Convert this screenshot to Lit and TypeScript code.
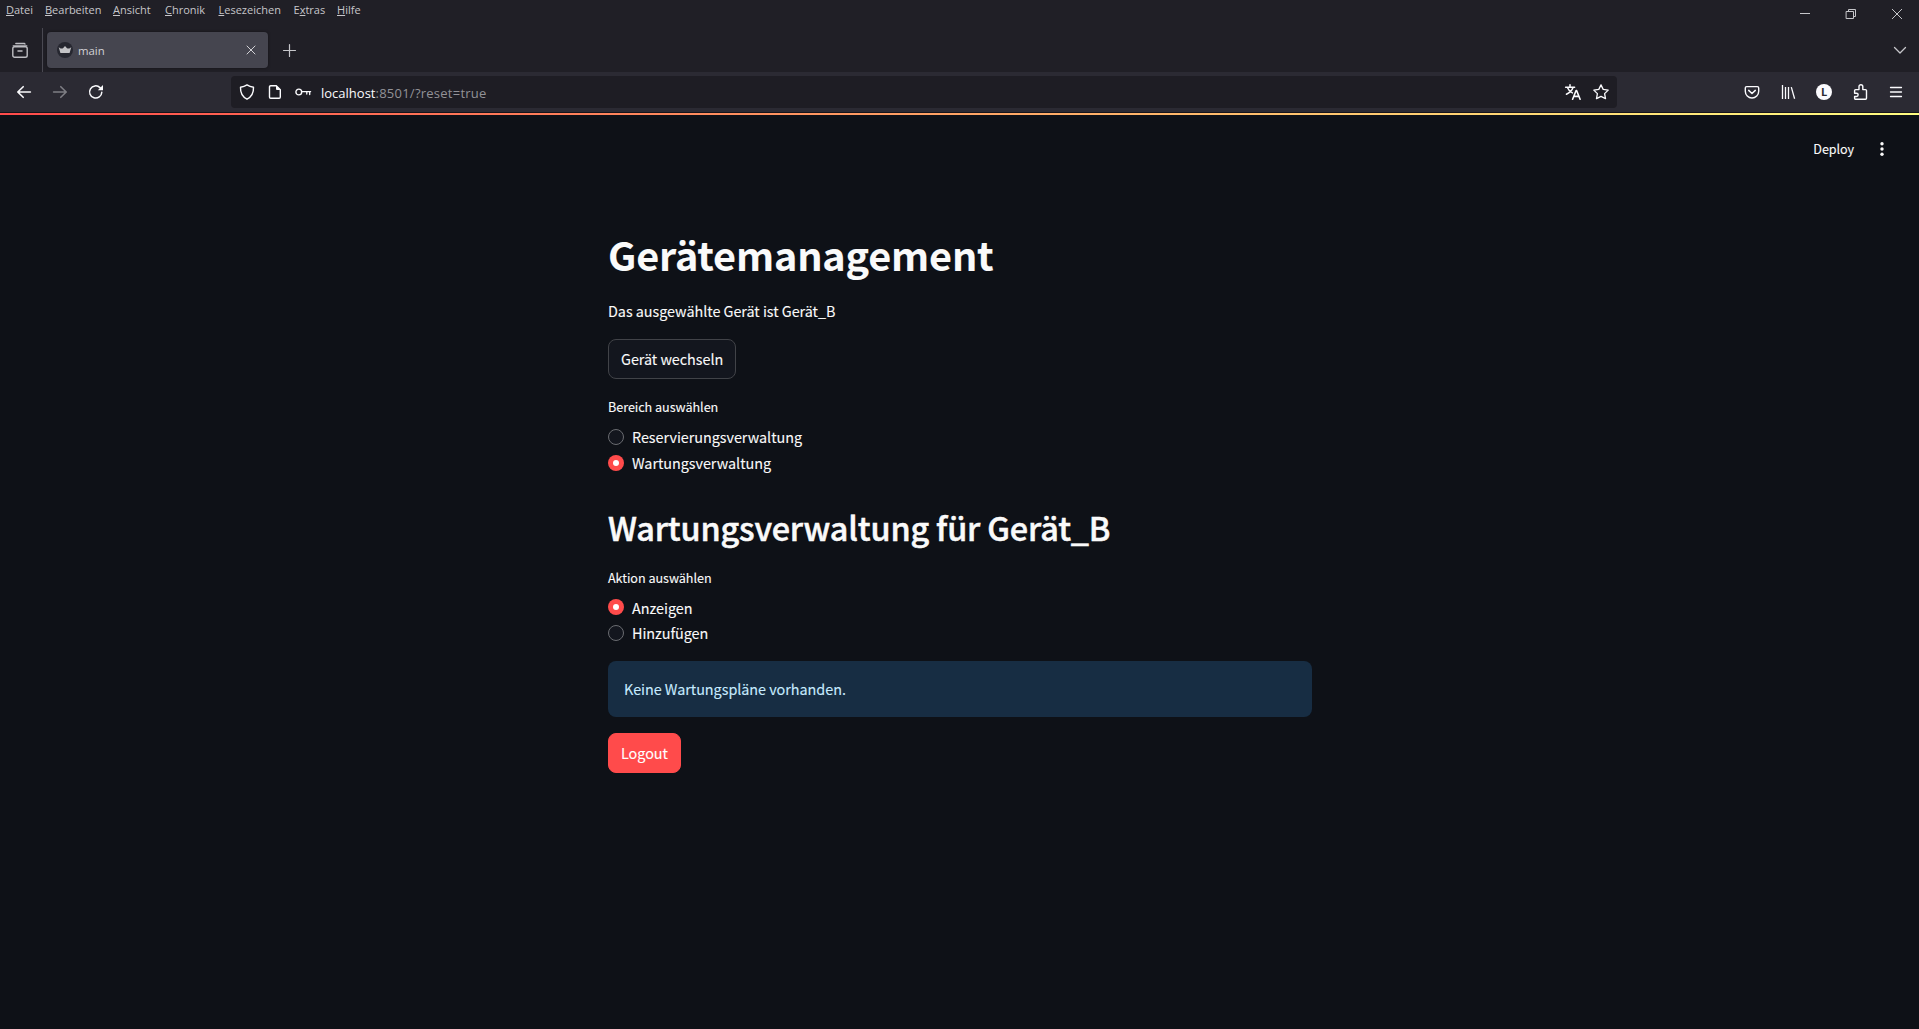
import { LitElement, html, svg, css, nothing } from "lit";
import { customElement, property, state } from "lit/decorators.js";
import { classMap } from "lit/directives/class-map.js";

const icons: Record<string, unknown> = {
  recent: svg`<path d="M3.8.9h8.4a.8.8 0 0 1 .8.6M1.2 3.2h13.6" transform="translate(0 .6)" stroke-width="1.3"/><rect x=".8" y="4.7" width="14.4" height="10.5" rx="1.8" stroke-width="1.4"/><path d="M6 9h4" stroke-width="1.5"/>`,
  back: svg`<path d="M14.4 8H2M7.2 2.7 1.8 8l5.4 5.3" stroke-width="1.6"/>`,
  forward: svg`<path d="M1.6 8H14M8.8 2.7 14.2 8l-5.4 5.3" stroke-width="1.6"/>`,
  reload: svg`<path d="M13.8 8.2A6.1 6.1 0 1 1 12 3.6l1.4 1.3" stroke-width="1.5"/><path d="M15 1.1v5.2H9.8z" fill="currentColor" stroke="none"/>`,
  shield: svg`<path d="M8 .9c2.2 1.5 4.3 2.1 6.5 2.4.2 4.8-1.4 9.3-6.5 11.9C2.9 12.6 1.3 8.1 1.5 3.3 3.7 3 5.8 2.4 8 .9z" stroke-width="1.4"/>`,
  page: svg`<path d="M3.7 1.7h5.6l4 4v7.3a1.2 1.2 0 0 1-1.2 1.2H3.7a1.2 1.2 0 0 1-1.2-1.2V2.9a1.2 1.2 0 0 1 1.2-1.2z" stroke-width="1.4"/><path d="M9 1.2 13.9 6.1H10a1 1 0 0 1-1-1z" fill="currentColor" stroke="none"/>`,
  key: svg`<circle cx="3.8" cy="8" r="2.9" stroke-width="1.4"/><path d="M7 7.6h8.6M11.8 7.6v2.4M14.7 7.6v3" stroke-width="1.3"/>`,
  translate: svg`<path d="M.6 3.2h9M5 .8v2.4M8 3.4C7 6.5 4.3 8.8 1.4 10.2M2.4 3.5C3.4 6 5.3 7.9 7.4 8.9" stroke-width="1.5"/><path d="m7.6 15.2 3.5-8.7h.5l3.5 8.7M8.9 12.4h5" stroke-width="1.6"/>`,
  star: svg`<path d="m8 .9 2.2 4.5 5 .7-3.6 3.5.9 5L8 12.3l-4.5 2.3.9-5L.8 6.1l5-.7z" stroke-width="1.3"/>`,
  pocket: svg`<path d="M2.7 2.6h10.6a1.4 1.4 0 0 1 1.4 1.4v3.3a6.7 6.7 0 0 1-13.4 0V4a1.4 1.4 0 0 1 1.4-1.4z" stroke-width="1.4"/><path d="M4.7 6.4 8 9.5l3.3-3.1" stroke-width="1.5"/>`,
  library: svg`<path d="M2.5 1v14M5.5 3v12M8.5 3v12M11.3 3.1l3.3 11.7" stroke-width="1.3" stroke-linecap="butt"/>`,
  puzzle: svg`<path d="M7 5.6V2.6a1.9 1.9 0 0 1 3.8 0v3h2.7a1 1 0 0 1 1 1v7.7a1 1 0 0 1-1 1H3.6a1 1 0 0 1-1-1v-1.800h1.900a1.600 1.600 0 0 0 0-3.300H2.600V6.600a1 1 0 0 1 1-1z" stroke-width="1.4"/>`,
  menu: svg`<path d="M2.5 3.5h11M2.5 8h11M2.5 12.5h11" stroke-width="1.3"/>`,
  close: svg`<path d="m4 4 8 8M12 4l-8 8" stroke-width="1"/>`,
  plus: svg`<path d="M8.5 2.5v12M2.5 8.5h12" stroke-width="1.2"/>`,
  chevron: svg`<path d="m2.5 5.5 5.500 5.500 5.500-5.500" stroke-width="1.3"/>`,
  minimize: svg`<path d="M3 8.5h10" stroke-width="1" stroke-linecap="butt"/>`,
  restore: svg`<path d="M3.5 6.5h7v7h-7zM5.5 6.5v-2h7v7h-2" stroke-width="1" stroke-linejoin="miter"/>`,
  shut: svg`<path d="m3.3 4.3 9.4 9.4M12.7 4.3l-9.4 9.4" stroke-width="1"/>`,
  kebab: svg`<g fill="currentColor" stroke="none"><circle cx="8" cy="2.7" r="1.7"/><circle cx="8" cy="8" r="1.7"/><circle cx="8" cy="13.3" r="1.7"/></g>`,
  crown: svg`<circle cx="8" cy="8" r="8" fill="#262730" stroke="none"/><path d="M1.7 5c1.300 1.600 3 1.900 4.300 1.300L8 4l2 2.300c1.300.6 3 .3 4.300-1.300L12.600 11H3.400z" fill="#c3c3c6" stroke="none"/>`,
};

@customElement("ui-icon")
class UiIcon extends LitElement {
  @property() name = "";
  static styles = css`
    :host { display: block; flex: none; width: 16px; height: 16px; }
    svg { display: block; overflow: visible; fill: none; stroke: currentColor; stroke-linecap: round; stroke-linejoin: round; }
  `;
  render() {
    return html`<svg width="16" height="16" viewBox="0 0 16 16">${icons[this.name] ?? nothing}</svg>`;
  }
}

@customElement("browser-chrome")
class BrowserChrome extends LitElement {
  static styles = css`
    :host { display: block; height: 113px; background: #201f26; color: #c6c6ca; font-family: "Open Sans", "Noto Sans", sans-serif; font-size: 11px; }
    .title { display: flex; justify-content: space-between; height: 28px; }
    .menus { display: grid; grid-template-columns: 39px 68px 52px 53.5px 75px 43.5px auto; padding-left: 6px; line-height: 20px; height: 20px; }
    u { text-decoration-thickness: 1px; text-underline-offset: 1px; }
    .controls { display: flex; gap: 30px; padding: 5px 14px 0 0; }
    .tabs { display: flex; align-items: center; height: 44px; }
    .recent { display: flex; align-items: center; box-sizing: border-box; width: 43px; height: 44px; padding: 0 0 0 12px; border-right: 1px solid #4a4952; color: #bdbdc2; }
    .tab { display: flex; align-items: center; box-sizing: border-box; width: 221px; height: 36px; margin: 0 13px 0 4px; padding: 0 9px 0 10px; border-radius: 4px; background: #45454f; box-shadow: 0 0 3px rgba(0,0,0,.4); color: #d2d2d6; }
    .tab span { flex: 1; margin-left: 5px; line-height: 20px; padding-top: 1px; font-size: 11.4px; }
    .all { margin-left: auto; padding-right: 11px; }
    .bar { display: flex; align-items: center; height: 40px; background: #2b2a33; color: #fbfbfe; border-bottom: 1px solid #15141b; }
    .nav { display: flex; gap: 20px; box-sizing: border-box; width: 231px; padding-left: 16px; }
    .off { opacity: .4; }
    .url { display: flex; align-items: center; gap: 12px; box-sizing: border-box; width: 1386px; height: 32px; padding: 0 8px; border-radius: 4px; background: #1e1d24; }
    .address { flex: 1; margin-left: -2px; padding-top: 1px; font-size: 13px; line-height: 20px; white-space: nowrap; }
    .rest { color: #929297; letter-spacing: .25px; }
    .extras { display: flex; align-items: center; gap: 20px; margin-left: auto; padding-right: 15px; }
    .avatar { display: flex; align-items: center; justify-content: center; width: 16px; height: 16px; border-radius: 50%; background: #fbfbfe; color: #2b2a33; font: 700 11px/16px "Open Sans", sans-serif; }
  `;
  render() {
    return html`
      <div class="title">
        <div class="menus">
          <span><u>D</u>atei</span><span><u>B</u>earbeiten</span><span><u>A</u>nsicht</span><span><u>C</u>hronik</span><span><u>L</u>esezeichen</span><span>E<u>x</u>tras</span><span><u>H</u>ilfe</span>
        </div>
        <div class="controls"><ui-icon name="minimize"></ui-icon><ui-icon name="restore"></ui-icon><ui-icon name="shut"></ui-icon></div>
      </div>
      <div class="tabs">
        <div class="recent"><ui-icon name="recent"></ui-icon></div>
        <div class="tab"><ui-icon name="crown"></ui-icon><span>main</span><ui-icon name="close"></ui-icon></div>
        <ui-icon name="plus"></ui-icon>
        <div class="all"><ui-icon name="chevron"></ui-icon></div>
      </div>
      <div class="bar">
        <div class="nav"><ui-icon name="back"></ui-icon><ui-icon class="off" name="forward"></ui-icon><ui-icon name="reload"></ui-icon></div>
        <div class="url">
          <ui-icon name="shield"></ui-icon><ui-icon name="page"></ui-icon><ui-icon name="key"></ui-icon>
          <div class="address">localhost<span class="rest">:8501/?reset=true</span></div>
          <ui-icon name="translate"></ui-icon><ui-icon name="star"></ui-icon>
        </div>
        <div class="extras">
          <ui-icon name="pocket"></ui-icon><ui-icon name="library"></ui-icon><span class="avatar">L</span><ui-icon name="puzzle"></ui-icon><ui-icon name="menu"></ui-icon>
        </div>
      </div>`;
  }
}

@customElement("radio-group")
class RadioGroup extends LitElement {
  @property() label = "";
  @property({ attribute: false }) options: string[] = [];
  @property({ type: Number }) selected = 0;
  static styles = css`
    :host { display: block; }
    .label { font-size: 12.6px; line-height: 21px; }
    .options { display: flex; flex-direction: column; gap: var(--row-gap, 2px); padding-top: var(--label-gap, 8px); }
    .option { display: flex; align-items: center; gap: 8px; height: 24px; line-height: 24px; cursor: pointer; }
    .text { padding-top: var(--text-drop, 0px); }
    .dot { display: flex; align-items: center; justify-content: center; box-sizing: border-box; width: 16px; height: 16px; border: 1px solid #6a6c71; border-radius: 50%; background: #13161e; }
    .dot.on { border: none; background: #ff4b4b; }
    .dot.on::after { content: ""; width: 6px; height: 6px; border-radius: 50%; background: #fff; }
  `;
  render() {
    return html`<div class="label">${this.label}</div>
      <div class="options">${this.options.map((o, i) => html`
        <div class="option" @click=${() => (this.selected = i)}>
          <span class=${classMap({ dot: true, on: i === this.selected })}></span><span class="text">${o}</span>
        </div>`)}</div>`;
  }
}

@customElement("app-root")
class AppRoot extends LitElement {
  @state() private device = "Gerät_B";
  static styles = css`
    :host { display: flex; flex-direction: column; height: 1029px; overflow: hidden; background: #0e1117; color: #fafafa; font-family: "Noto Sans CJK SC", sans-serif; font-size: 14.4px; }
    .progress { flex: none; height: 2px; background: linear-gradient(90deg, #ff4b4b, #fffd80); }
    header { display: flex; justify-content: flex-end; align-items: center; gap: 20px; height: 68px; padding-right: 29px; font-size: 12.6px; line-height: 20px; letter-spacing: -.08px; -webkit-text-stroke: .1px; }
    main { width: 704px; margin: 44px 0 0 calc(50% - 351.5px); letter-spacing: -.04px; -webkit-text-stroke: .1px; }
    h1 { margin: 0; font-size: 39.6px; line-height: 53px; font-weight: 700; letter-spacing: -.17px; }
    p { margin: 18px 0 15px; line-height: 26px; }
    button { display: block; box-sizing: border-box; height: 40px; padding: 0 12px; border: 1px solid #414348; border-radius: 8px; background: #13161e; color: inherit; font: inherit; line-height: 38px; letter-spacing: inherit; }
    .first { margin-top: 17px; }
    h2 { margin: 30px 0 19px; font-size: 32.4px; line-height: 43px; font-weight: 500; letter-spacing: -.16px; -webkit-text-stroke: .5px #fafafa; }
    .second { --label-gap: 7.4px; --row-gap: 1.6px; --text-drop: .5px; }
    .alert { margin: 16px 0; padding: 0 16px; height: 56px; line-height: 56px; border-radius: 8px; background: #172d43; color: #c7ebff; }
    .primary { border-color: #ff4b4b; background: #ff4b4b; color: #fff; }
  `;
  render() {
    return html`
      <browser-chrome></browser-chrome>
      <div class="progress"></div>
      <header><span>Deploy</span><ui-icon name="kebab"></ui-icon></header>
      <main>
        <h1>Gerätemanagement</h1>
        <p>Das ausgewählte Gerät ist ${this.device}</p>
        <button>Gerät wechseln</button>
        <radio-group class="first" label="Bereich auswählen" .options=${["Reservierungsverwaltung", "Wartungsverwaltung"]} .selected=${1}></radio-group>
        <h2>Wartungsverwaltung für ${this.device}</h2>
        <radio-group class="second" label="Aktion auswählen" .options=${["Anzeigen", "Hinzufügen"]} .selected=${0}></radio-group>
        <div class="alert">Keine Wartungspläne vorhanden.</div>
        <button class="primary">Logout</button>
      </main>`;
  }
}
